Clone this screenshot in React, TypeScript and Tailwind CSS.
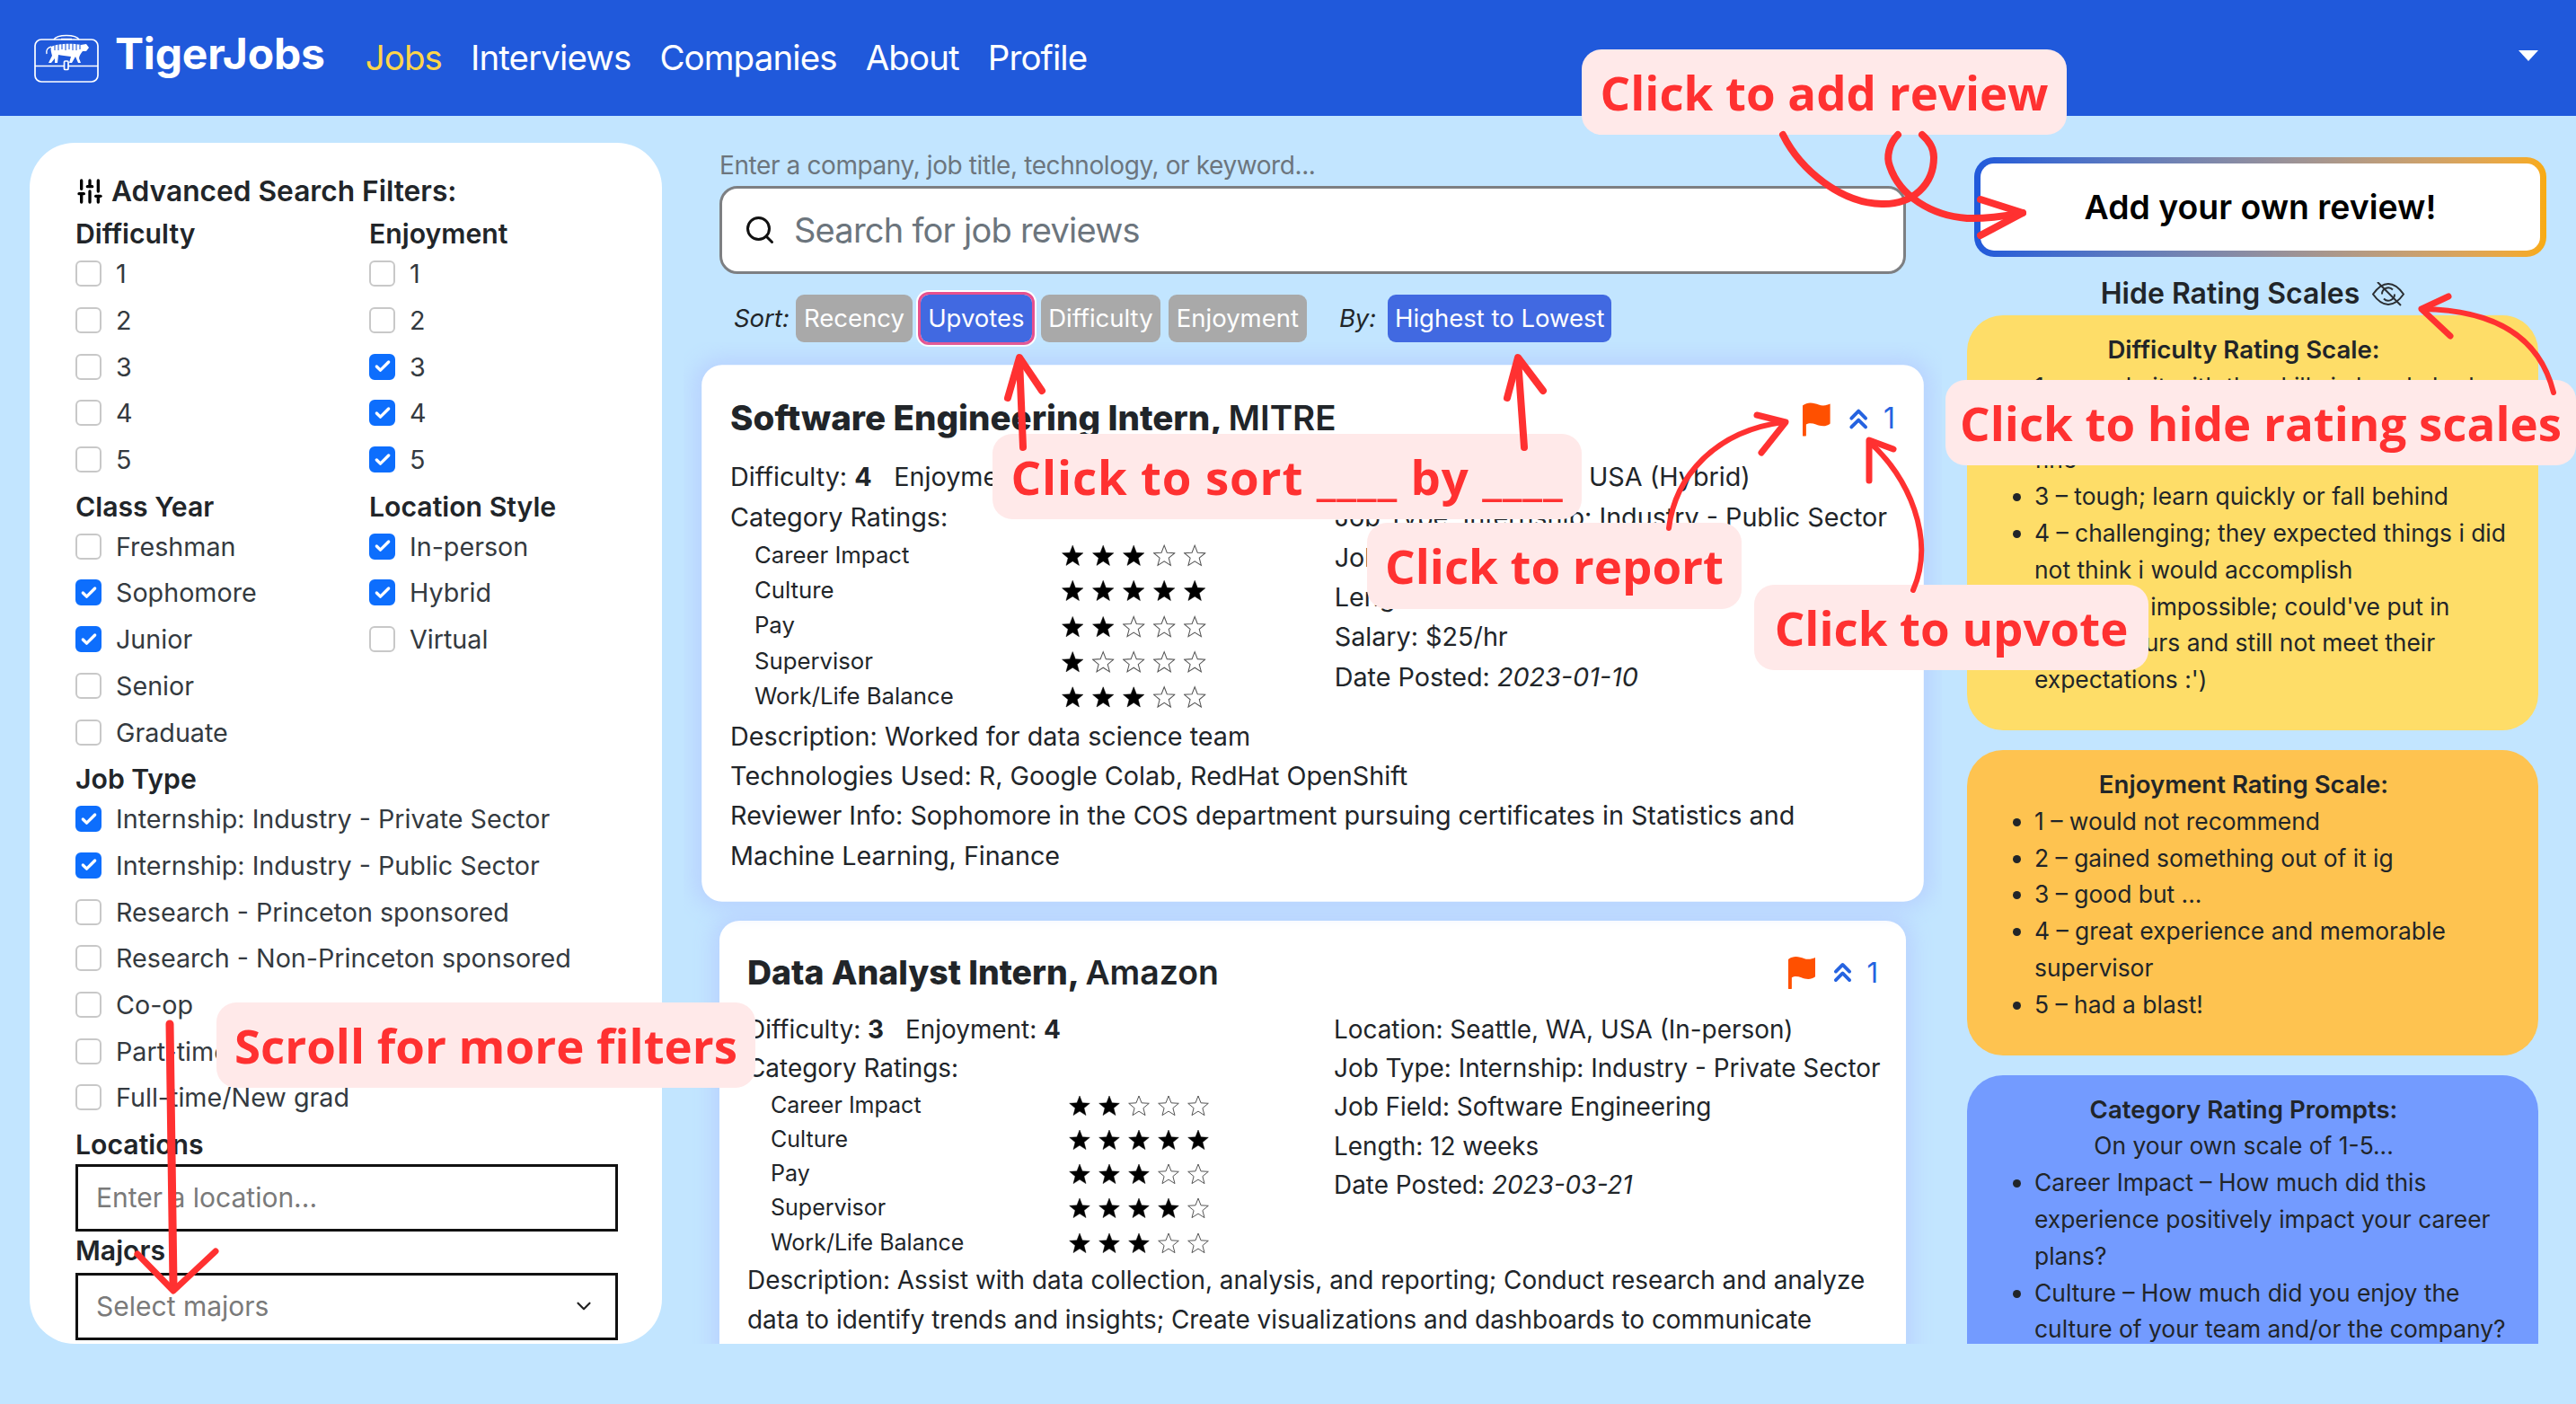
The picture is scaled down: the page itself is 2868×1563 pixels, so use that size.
import { Search, ChevronDown, Check, SlidersVertical } from "lucide-react";

const CheckRow = ({ label, checked = false }: { label: string; checked?: boolean }) => (
  <div className="flex h-[51.7px] items-center gap-[16px] text-[28.7px] text-[#343a40]">
    <span className={`flex h-[29px] w-[29px] shrink-0 items-center justify-center rounded-[6px] border-2 ${checked ? "border-[#0d6efd] bg-[#0d6efd]" : "border-[#c8c8c8] bg-white"}`}>
      {checked && <Check className="h-[20px] w-[20px] text-white" strokeWidth={4} />}
    </span>
    <span className="whitespace-nowrap">{label}</span>
  </div>
);

const Heading = ({ children }: { children: string }) => (
  <div className="flex h-[45px] items-center pt-[9px] text-[30.2px] font-semibold text-[#212529]">{children}</div>
);

const Stars = ({ n }: { n: number }) => (
  <div className="flex gap-[9px]">
    {[1, 2, 3, 4, 5].map((i) => (
      <svg key={i} viewBox="0 0 24 24" className="h-[25px] w-[24px]">
        <path
          d="M12 1.5l3 7.8 8.3.5-6.4 5.3 2.1 8-7-4.5-7 4.5 2.1-8L.7 9.8l8.3-.5z"
          fill={i <= n ? "#000" : "#fff"}
          stroke={i <= n ? "#000" : "#555"}
          strokeWidth={i <= n ? 0.5 : 1}
        />
      </svg>
    ))}
  </div>
);

const Flag = () => (
  <svg viewBox="0 0 31 38" className="h-[37px] w-[30px]">
    <path d="M0 4C6-1 13 1 18 3c4 1.500 9 1 13-1v22c-5 4-11 3-16 1-4-1.500-8-2-11 0v12a2 2 0 0 1-4 0z" fill="#ff5000" />
  </svg>
);

const Upvote = () => (
  <svg viewBox="0 0 22 24" className="h-[23px] w-[21px]" fill="none" stroke="#2563e0" strokeWidth="4" strokeLinecap="round" strokeLinejoin="round">
    <path d="M3 11l8-8 8 8M3 21l8-8 8 8" />
  </svg>
);

const EyeSlash = () => (
  <svg viewBox="0 0 36 27" className="h-[27px] w-[36px]" fill="none" stroke="#2b2f33" strokeWidth="2">
    <path d="M1 13.500C7 5 13 2 18 2s11 3 17 11.500C29 22 23 25 18 25S7 22 1 13.500z" />
    <path d="M11 13.500a7 7 0 0 1 12-5M25 13.500a7 7 0 0 1-12 5" />
    <path d="M6 0l26 26" />
  </svg>
);

const Logo = () => (
  <svg viewBox="0 0 72 54" className="h-[54px] w-[72px]" fill="none" stroke="#fff" strokeWidth="1.700">
    <rect x="1" y="6" width="70" height="47" rx="7" />
    <path d="M22 6C26 0 46 0 50 6M30 5.500h12M1 35.500h32M38 35.500h33" />
    <rect x="33.500" y="30" width="4.500" height="9.500" rx="1" />
    <path d="M19 14c-4 1-6 4-5 8" strokeWidth="1.400" />
    <path
      d="M19 14c7-4 25-4 33-2l6-1 3 4-3 4h-4c-2 3-4 5-4 8l2 5h-3l-3-7-4 7h-3l2-7c-5-1-11-1-14-2l-1 9h-3v-5l-4 5h-3l4-8c-1-4-2-7-1-10z"
      fill="#fff"
      stroke="none"
    />
    <path d="M23 11v7M27 10v8M31 10v7M35 10v8M39 10v7M43 10v8M47 11v7M51 12v5" stroke="#2059db" strokeWidth="1.100" />
  </svg>
);

const ratingsA = [
  ["Career Impact", 3],
  ["Culture", 5],
  ["Pay", 2],
  ["Supervisor", 1],
  ["Work/Life Balance", 3],
] as const;

const ratingsB = [
  ["Career Impact", 2],
  ["Culture", 5],
  ["Pay", 3],
  ["Supervisor", 4],
  ["Work/Life Balance", 3],
] as const;

type CardProps = {
  title: string;
  company: string;
  difficulty: number;
  enjoyment: number;
  ratings: readonly (readonly [string, number])[];
  details: string[];
  date: string;
  lines: string[];
  className?: string;
};

const ReviewCard = ({ title, company, difficulty, enjoyment, ratings, details, date, lines, className }: CardProps) => (
  <div className={`shrink-0 rounded-[22px] bg-white px-[31px] pt-[30px] pb-[27px] text-[27.9px] leading-[43.3px] text-[#212529] shadow-[0_0_22px_8px_#b9d3ff] ${className ?? ""}`}>
    <div className="flex h-[56px] items-center justify-between">
      <div className="text-[37.4px] font-extrabold text-[#212529]">
        {title}, <span className="font-semibold">{company}</span>
      </div>
      <div className="flex items-center">
        <Flag />
        <span className="ml-[20px]"><Upvote /></span>
        <span className="ml-[16px] text-[31px] leading-[40px] text-[#2563e0]">1</span>
      </div>
    </div>
    <div className="mt-[14px] grid grid-cols-[653px_1fr]">
      <div>
        <div>
          Difficulty: <b>{difficulty}</b>
          <span className="ml-[24px]">Enjoyment: <b>{enjoyment}</b></span>
        </div>
        <div>Category Ratings:</div>
        <div className="flex flex-col text-[25px]">
          {ratings.map(([name, n]) => (
            <div key={name} className="flex h-[38.2px] items-center pl-[26px]">
              <span className="w-[332px]">{name}</span>
              <Stars n={n} />
            </div>
          ))}
        </div>
      </div>
      <div>
        {details.map((d) => (
          <div key={d} className="whitespace-nowrap">{d}</div>
        ))}
        <div>Date Posted: <i>{date}</i></div>
      </div>
    </div>
    <div className="mt-[2px]">
      {lines.map((l) => (
        <div key={l}>{l}</div>
      ))}
    </div>
  </div>
);

const Note = ({ text, className }: { text: string; className: string }) => (
  <div className={`absolute flex items-center justify-center rounded-[22px] bg-[#ffe9e9] whitespace-nowrap text-[#ff3131] font-bold text-[52.8px] [font-family:'Open_Sans',sans-serif] ${className}`}>
    {text}
  </div>
);

const Annotations = () => (
  <svg viewBox="0 0 2868 1563" className="pointer-events-none absolute top-0 left-0 h-[1563px] w-[2868px]" fill="none" stroke="#ff3131" strokeLinecap="round" strokeLinejoin="round">
    {/* sort arrows */}
    <path d="M1139 498L1135 400" strokeWidth="8" />
    <path d="M1122 443L1135 398L1160 435" strokeWidth="8" />
    <path d="M1697 498L1690 400" strokeWidth="8" />
    <path d="M1678 443L1690 398L1718 435" strokeWidth="8" />
    {/* report */}
    <path d="M1858 588C1865 530 1910 480 1985 470" strokeWidth="6" />
    <path d="M1956 462L1988 470L1961 504" strokeWidth="7" />
    {/* upvote */}
    <path d="M2130 657C2155 600 2125 530 2081 492" strokeWidth="6" />
    <path d="M2108 500L2081 490L2081 535" strokeWidth="7" />
    {/* add review */}
    <path d="M1985 150C2005 190 2050 226 2095 227C2130 228 2153 205 2153 175C2153 165 2148 157 2140 150" strokeWidth="8" />
    <path d="M2113 150C2103 160 2100 175 2104 185C2115 218 2150 240 2190 243C2215 244 2235 240 2252 237" strokeWidth="8" />
    <path d="M2205 222L2252 237L2205 262" strokeWidth="8" />
    {/* hide scales */}
    <path d="M2843 437C2830 385 2790 345 2696 344" strokeWidth="6" />
    <path d="M2726 330L2696 344L2728 374" strokeWidth="7" />
    {/* scroll */}
    <path d="M189 1140L193 1430" strokeWidth="9" />
    <path d="M153 1396L193 1437L240 1393" strokeWidth="7" />
  </svg>
);

export default function App() {
  return (
    <div className="relative h-[1563px] w-[2868px] overflow-hidden bg-[#c2e5ff] [font-family:Inter,sans-serif]">
      <header className="flex h-[129px] items-center bg-[#2059db] pr-[42px] pl-[38px]">
        <Logo />
        <div className="ml-[18px] -mt-[10px] text-[48px] font-bold tracking-[-0.2px] text-white">TigerJobs</div>
        <nav className="ml-[45px] flex gap-[32px] text-[38.5px] tracking-[-0.9px] text-white">
          <span className="text-[#ffd54a]">Jobs</span>
          <span>Interviews</span>
          <span>Companies</span>
          <span>About</span>
          <span>Profile</span>
        </nav>
        <div className="ml-auto -mt-[6px] h-0 w-0 border-x-[11px] border-t-[12px] border-x-transparent border-t-white" />
      </header>

      <main className="flex h-[1434px] pt-[30px] pb-[67px] pl-[33px]">
        {/* filters */}
        <aside className="h-full w-[704px] shrink-0 overflow-hidden rounded-[50px] bg-white pt-[33px] pl-[51px] text-[#212529]">
          <div className="flex h-[42px] items-center gap-[8px] text-[31.7px] font-semibold">
            <SlidersVertical className="h-[32px] w-[32px] text-black" strokeWidth={2.5} />
            Advanced Search Filters:
          </div>
          <div className="grid w-[603px] grid-cols-[327px_1fr]">
            <div>
              <Heading>Difficulty</Heading>
              {["1", "2", "3", "4", "5"].map((l) => <CheckRow key={l} label={l} />)}
              <Heading>Class Year</Heading>
              <CheckRow label="Freshman" />
              <CheckRow label="Sophomore" checked />
              <CheckRow label="Junior" checked />
              <CheckRow label="Senior" />
              <CheckRow label="Graduate" />
            </div>
            <div>
              <Heading>Enjoyment</Heading>
              {["1", "2"].map((l) => <CheckRow key={l} label={l} />)}
              {["3", "4", "5"].map((l) => <CheckRow key={l} label={l} checked />)}
              <Heading>Location Style</Heading>
              <CheckRow label="In-person" checked />
              <CheckRow label="Hybrid" checked />
              <CheckRow label="Virtual" />
            </div>
          </div>
          <Heading>Job Type</Heading>
          <CheckRow label="Internship: Industry - Private Sector" checked />
          <CheckRow label="Internship: Industry - Public Sector" checked />
          <CheckRow label="Research - Princeton sponsored" />
          <CheckRow label="Research - Non-Princeton sponsored" />
          <CheckRow label="Co-op" />
          <CheckRow label="Part-time" />
          <CheckRow label="Full-time/New grad" />
          <Heading>Locations</Heading>
          <div className="mt-[3px] flex h-[75px] w-[604px] items-center border-[3px] border-[#111] pl-[20px] text-[30px] text-[#7a7a7a]">Enter a location...</div>
          <div className="flex h-[44px] items-center text-[30.2px] font-semibold">Majors</div>
          <div className="mt-[2px] flex h-[75px] w-[604px] items-center justify-between border-[3px] border-[#111] pr-[22px] pl-[20px] text-[30px] text-[#7a7a7a]">
            Select majors
            <ChevronDown className="h-[26px] w-[26px] text-[#222]" strokeWidth={2} />
          </div>
        </aside>

        {/* search + reviews */}
        <section className="ml-[64px] flex h-full w-[1321px] shrink-0 flex-col">
          <div className="flex h-[48px] shrink-0 items-center pt-[2px] text-[28px] tracking-[-0.4px] text-[#6c757d]">Enter a company, job title, technology, or keyword...</div>
          <div className="flex h-[98px] w-[1321px] shrink-0 items-center gap-[20px] rounded-[20px] border-[3px] border-[#7d7f82] bg-white pl-[24px] text-[38px] tracking-[-0.77px] text-[#6c757d]">
            <Search className="h-[36px] w-[36px] text-[#111]" strokeWidth={2} />
            Search for job reviews
          </div>
          <div className="mt-[23px] flex h-[53px] shrink-0 items-center text-[27.5px] text-white">
            <i className="ml-[16px] mr-[7px] text-[#212529]">Sort:</i>
            <span className="flex h-full w-[130px] items-center justify-center rounded-[9px] bg-[#a9a9a9]">Recency</span>
            <span className="ml-[9px] flex h-full w-[124px] items-center justify-center rounded-[9px] bg-[#4169e1] outline-[3px] outline-[#e6518f] ring-[5px] ring-white">Upvotes</span>
            <span className="ml-[10px] flex h-full w-[133px] items-center justify-center rounded-[9px] bg-[#a9a9a9]">Difficulty</span>
            <span className="ml-[9px] flex h-full w-[154px] items-center justify-center rounded-[9px] bg-[#a9a9a9]">Enjoyment</span>
            <i className="ml-[36px] mr-[13px] text-[#212529]">By:</i>
            <span className="flex h-full w-[249px] items-center justify-center rounded-[9px] bg-[#4169e1]">Highest to Lowest</span>
          </div>
          <div className="-mx-[40px] flex min-h-0 flex-1 flex-col gap-[30px] overflow-hidden px-[40px] pt-[34px]">
            <ReviewCard
              className="scale-[1.03]"
              title="Software Engineering Intern"
              company="MITRE"
              difficulty={4}
              enjoyment={5}
              ratings={ratingsA}
              details={["Location: Rome, NY, USA (Hybrid)", "Job Type: Internship: Industry - Public Sector", "Job Field: Data Science", "Length: 10 weeks", "Salary: $25/hr"]}
              date="2023-01-10"
              lines={["Description: Worked for data science team", "Technologies Used: R, Google Colab, RedHat OpenShift", "Reviewer Info: Sophomore in the COS department pursuing certificates in Statistics and", "Machine Learning, Finance"]}
            />
            <ReviewCard
              title="Data Analyst Intern"
              company="Amazon"
              difficulty={3}
              enjoyment={4}
              ratings={ratingsB}
              details={["Location: Seattle, WA, USA (In-person)", "Job Type: Internship: Industry - Private Sector", "Job Field: Software Engineering", "Length: 12 weeks"]}
              date="2023-03-21"
              lines={["Description: Assist with data collection, analysis, and reporting; Conduct research and analyze", "data to identify trends and insights; Create visualizations and dashboards to communicate", "findings to stakeholders"]}
            />
          </div>
        </section>

        {/* rating scales */}
        <aside className="ml-[68px] flex h-full w-[645px] shrink-0 flex-col items-stretch pt-[16px] text-[#212529]">
          <div className="ml-[8px] w-[637px] shrink-0 rounded-[22px] bg-gradient-to-r from-[#2059db] to-[#f9ab0f] p-[7px]">
            <div className="flex h-[97px] items-center justify-center rounded-[15px] bg-white pt-[2px] text-[37.4px] font-semibold text-black">Add your own review!</div>
          </div>
          <div className="mt-[18px] flex h-[46px] w-[636px] shrink-0 items-center justify-center gap-[14px] text-[32px] font-semibold">
            Hide Rating Scales
            <EyeSlash />
          </div>
          <div className="mt-[1px] flex w-[636px] min-h-0 flex-1 flex-col gap-[22px] overflow-hidden text-[26.4px] leading-[40.8px]">
            <div className="shrink-0 rounded-[40px] bg-[#fedd68] pt-[18px] pb-[36px]">
              <div className="pr-[20px] text-center text-[27.6px] font-semibold">Difficulty Rating Scale:</div>
              <ul className="list-disc pr-[30px] pl-[75px]">
                <li>1 – can do it with the skills i already had</li>
                <li>2 – had some learning curve, but did just fine</li>
                <li>3 – tough; learn quickly or fall behind</li>
                <li>4 – challenging; they expected things i did not think i would accomplish</li>
                <li>5 – nearly impossible; could've put in infinite hours and still not meet their expectations :')</li>
              </ul>
            </div>
            <div className="shrink-0 rounded-[40px] bg-[#fec350] pt-[18px] pb-[36px]">
              <div className="pr-[20px] text-center text-[27.6px] font-semibold">Enjoyment Rating Scale:</div>
              <ul className="list-disc pr-[30px] pl-[75px]">
                <li>1 – would not recommend</li>
                <li>2 – gained something out of it ig</li>
                <li>3 – good but ...</li>
                <li>4 – great experience and memorable supervisor</li>
                <li>5 – had a blast!</li>
              </ul>
            </div>
            <div className="rounded-[40px] bg-[#739bff] pt-[18px] pb-[36px]">
              <div className="pr-[20px] text-center text-[27.6px] font-semibold">Category Rating Prompts:</div>
              <div className="pr-[20px] text-center">On your own scale of 1-5...</div>
              <ul className="list-disc pr-[30px] pl-[75px]">
                <li>Career Impact – How much did this experience positively impact your career plans?</li>
                <li>Culture – How much did you enjoy the culture of your team and/or the company?</li>
              </ul>
            </div>
          </div>
        </aside>
      </main>

      {/* tutorial overlays */}
      <Note text="Click to add review" className="top-[55px] left-[1761px] h-[95px] w-[540px]" />
      <Note text="Click to sort ____ by ____" className="top-[483px] left-[1105px] h-[95px] w-[656px] tracking-[0.85px]" />
      <Note text="Click to report" className="top-[582px] left-[1522px] h-[96px] w-[417px]" />
      <Note text="Click to upvote" className="top-[651px] left-[1953px] h-[95px] w-[439px]" />
      <Note text="Click to hide rating scales" className="top-[423px] left-[2166px] h-[95px] w-[702px]" />
      <Note text="Scroll for more filters" className="top-[1116px] left-[241px] h-[95px] w-[600px]" />
      <Annotations />
    </div>
  );
}
